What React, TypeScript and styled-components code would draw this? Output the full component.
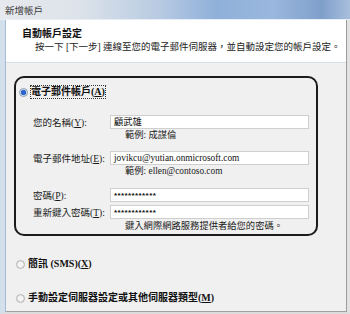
import React from "react";
import styled, { createGlobalStyle } from "styled-components";

const Global = createGlobalStyle`
  html, body { margin: 0; padding: 0; background: #f0f0f0; }
  body { font-family: "Liberation Serif", "Noto Sans CJK TC", serif; color: #111; }
`;

const Window = styled.div`
  width: 350px;
  height: 314px;
  display: flex;
  flex-direction: column;
  overflow: hidden;
  background: #e9edf2;
`;

const TitleBar = styled.div`
  height: 19px;
  flex: none;
  display: flex;
  align-items: center;
  padding-left: 5px;
  font-size: 9.5px;
  color: #3a3a3a;
  background: linear-gradient(90deg, #e6e9ed 0%, #dde3ea 22%, #b9cbe2 45%, #8fb0da 62%, #9ab8de 78%, #7f9fcb 92%, #a8bfdc 100%);
  border-bottom: 1px solid #e8eef6;
`;

const Frame = styled.div`
  flex: 1;
  display: flex;
  flex-direction: column;
  border-left: 5px solid #d3dfec;
  border-right: 3px solid #e2e2e2;
  border-bottom: 2px solid #dcdcdc;
  box-shadow: inset 1px 0 0 #a9bbd0, inset -1px 0 0 #9c9c9c, inset 0 -1px 0 #a0a0a0;
`;

const Header = styled.div`
  height: 43px;
  flex: none;
  background: #ffffff;
  border-bottom: 1px solid #d6dde3;
  padding: 7px 0 0 16px;
  box-sizing: border-box;
  margin-left: 1px;
  margin-right: 1px;
`;

const HeaderTitle = styled.div`
  font-size: 10px;
  font-weight: bold;
  line-height: 13px;
  color: #111;
`;

const HeaderSub = styled.div`
  font-size: 9.5px;
  line-height: 13px;
  margin-top: 1px;
  padding-left: 13px;
  white-space: nowrap;
  color: #222;
`;

const Body = styled.div`
  flex: 1;
  background: #f0f0f0;
  padding: 13px 0 0 8px;
  margin-left: 1px;
  margin-right: 1px;
  margin-bottom: 1px;
`;

const GroupBox = styled.div`
  width: 304px;
  box-sizing: border-box;
  border: 2px solid #1c1c1c;
  border-radius: 10px;
  padding: 0 0 2px 0;
  height: 160px;
`;

const RadioRow = styled.div<{ $mt: number; $ml: number }>`
  display: flex;
  align-items: center;
  height: 12px;
  margin-top: ${(p) => p.$mt}px;
  margin-left: ${(p) => p.$ml}px;
  gap: 3px;
  font-size: 10px;
  font-weight: bold;
  white-space: nowrap;
`;

const Radio = styled.span<{ $checked?: boolean }>`
  width: 9px;
  height: 9px;
  border-radius: 50%;
  box-sizing: border-box;
  border: 1px solid ${(p) => (p.$checked ? "#8a9bb0" : "#b5b5b5")};
  background: ${(p) =>
    p.$checked
      ? "radial-gradient(circle, #2b63c9 0 2.2px, #6f9fe0 2.6px, #e8eef6 3.2px)"
      : "radial-gradient(circle, #f4f4f4 0 2px, #dedede 4px)"};
  flex: none;
`;

const Label = styled.span<{ $outlined?: boolean }>`
  ${(p) => (p.$outlined ? "outline: 1px dotted #333; outline-offset: 0px;" : "")}
  line-height: 12px;
`;

const Key = styled.span`
  text-decoration: underline;
`;

const FieldRow = styled.div<{ $mt: number }>`
  display: grid;
  grid-template-columns: 77px 199px;
  align-items: center;
  margin-top: ${(p) => p.$mt}px;
  padding-left: 17px;
  height: 14px;
`;

const FieldLabel = styled.span`
  font-size: 9.5px;
  white-space: nowrap;
  color: #1a1a1a;
`;

const Input = styled.div`
  height: 14px;
  box-sizing: border-box;
  background: #fff;
  border: 1px solid #cfcfcf;
  font-size: 9.3px;
  line-height: 12px;
  padding-left: 3px;
  white-space: nowrap;
  overflow: hidden;
  color: #111;
`;

const Pwd = styled.span`
  font-family: "Liberation Sans", sans-serif;
  font-size: 8px;
  letter-spacing: 0.4px;
  font-weight: bold;
`;

const Hint = styled.div<{ $mt?: number }>`
  height: 12px;
  line-height: 12px;
  margin-top: ${(p) => p.$mt ?? 0}px;
  padding-left: 109px;
  font-size: 9.3px;
  white-space: nowrap;
  color: #1a1a1a;
`;

export default function App() {
  return (
    <>
      <Global />
      <Window>
        <TitleBar>新增帳戶</TitleBar>
        <Frame>
          <Header>
            <HeaderTitle>自動帳戶設定</HeaderTitle>
            <HeaderSub>按一下 [下一步] 連線至您的電子郵件伺服器，並自動設定您的帳戶設定。</HeaderSub>
          </Header>
          <Body>
            <GroupBox>
              <RadioRow $mt={8} $ml={3}>
                <Radio $checked />
                <Label $outlined>
                  電子郵件帳戶(<Key>A</Key>)
                </Label>
              </RadioRow>
              <FieldRow $mt={17}>
                <FieldLabel>
                  您的名稱(<Key>Y</Key>):
                </FieldLabel>
                <Input>顧武雄</Input>
              </FieldRow>
              <Hint>範例: 成謀倫</Hint>
              <FieldRow $mt={10}>
                <FieldLabel>
                  電子郵件地址(<Key>E</Key>):
                </FieldLabel>
                <Input>jovikcu@yutian.onmicrosoft.com</Input>
              </FieldRow>
              <Hint>範例: ellen@contoso.com</Hint>
              <FieldRow $mt={11}>
                <FieldLabel>
                  密碼(<Key>P</Key>):
                </FieldLabel>
                <Input>
                  <Pwd>************</Pwd>
                </Input>
              </FieldRow>
              <FieldRow $mt={3}>
                <FieldLabel>
                  重新鍵入密碼(<Key>T</Key>):
                </FieldLabel>
                <Input>
                  <Pwd>************</Pwd>
                </Input>
              </FieldRow>
              <Hint $mt={1}>鍵入網際網路服務提供者給您的密碼。</Hint>
            </GroupBox>
            <RadioRow $mt={22} $ml={2}>
              <Radio />
              <Label>
                簡訊 (SMS)(<Key>X</Key>)
              </Label>
            </RadioRow>
            <RadioRow $mt={22} $ml={2}>
              <Radio />
              <Label>
                手動設定伺服器設定或其他伺服器類型(<Key>M</Key>)
              </Label>
            </RadioRow>
          </Body>
        </Frame>
      </Window>
    </>
  );
}
